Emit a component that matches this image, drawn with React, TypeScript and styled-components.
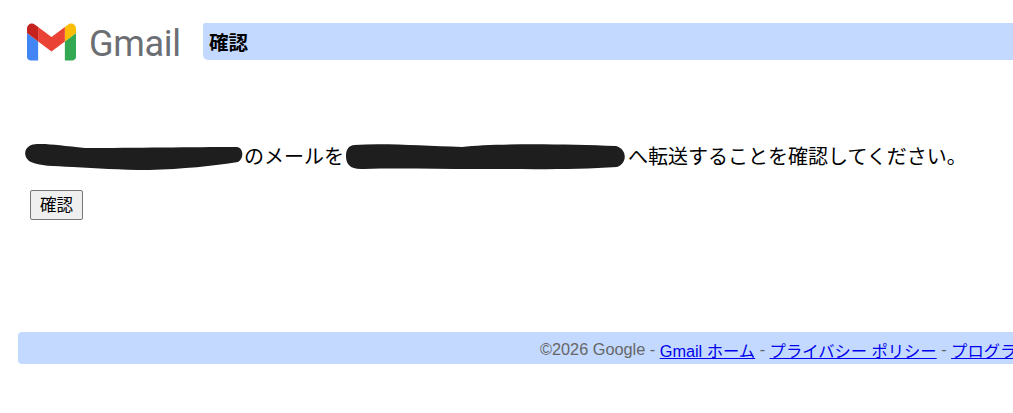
import React from "react";
import styled, { createGlobalStyle } from "styled-components";

const GlobalStyle = createGlobalStyle`
  html, body {
    margin: 0;
    padding: 0;
    background: #fff;
    overflow: hidden;
  }
  body {
    font-family: "Liberation Sans", "Noto Sans CJK JP", sans-serif;
  }
`;

const Page = styled.div`
  width: 1013px;
  height: 413px;
  overflow: hidden;
  display: flex;
  flex-direction: column;
`;

const Header = styled.header`
  display: flex;
  align-items: flex-start;
  padding: 23px 0 0 27px;
  height: 37px;
`;

const Logo = styled.div`
  display: flex;
  align-items: center;
  gap: 13px;
  width: 176px;
  height: 38px;
  flex: none;
`;

const Wordmark = styled.span`
  font-family: "Roboto", sans-serif;
  font-size: 36px;
  line-height: 38px;
  letter-spacing: -0.3px;
  padding-top: 3px;
  color: #6b6e72;
`;

const TitleBar = styled.div`
  flex: 1;
  height: 37px;
  background: #c3d9ff;
  border-bottom-left-radius: 5px;
  border-top-left-radius: 2px;
  padding-left: 6px;
  display: flex;
  align-items: center;
`;

const Title = styled.h1`
  margin: 0;
  font-size: 19.5px;
  font-weight: bold;
  color: #000;
`;

const Main = styled.main`
  padding: 83px 0 0 23px;
  height: 272px;
  box-sizing: border-box;
`;

const Message = styled.p`
  margin: 0;
  display: flex;
  align-items: center;
  height: 28px;
  font-size: 20px;
  line-height: 24px;
  color: #000;
  white-space: nowrap;
`;

const Redaction = styled.svg`
  flex: none;
  display: block;
`;

const SecondRedaction = styled(Redaction)`
  margin: 0 1px 0 2px;
`;

const ConfirmButton = styled.button`
  display: block;
  margin: 19px 0 0 7px;
  width: 53px;
  height: 30px;
  padding: 0;
  border: 1px solid #767676;
  border-radius: 2px;
  background: #efefef;
  color: #000;
  font-family: inherit;
  font-size: 16.5px;
  line-height: 1;
`;

const Footer = styled.footer`
  margin: 0 0 0 18px;
  height: 32px;
  flex: none;
  box-sizing: border-box;
  padding: 3px 0 0 522px;
  background: #c3d9ff;
  border-radius: 4px 0 0 4px;
  display: flex;
  align-items: center;
  font-size: 16.3px;
  color: #666;
  white-space: pre;
  overflow: hidden;
`;

const FooterLink = styled.a`
  color: #0000ee;
  text-decoration: underline;
`;

const GmailMark = () => (
  <svg width="49" height="38" viewBox="52 42 88 66" aria-label="Gmail">
    <path fill="#4285f4" d="M58 108h14V74L52 59v43c0 3.32 2.69 6 6 6" />
    <path fill="#34a853" d="M120 108h14c3.32 0 6-2.69 6-6V59l-20 15" />
    <path fill="#fbbc04" d="M120 48v26l20-15v-8c0-7.42-8.47-11.65-14.4-7.2" />
    <path fill="#ea4335" d="M72 74V48l24 18 24-18v26L96 92" />
    <path fill="#c5221f" d="M52 51v8l20 15V48l-5.6-4.2c-5.94-4.45-14.4-.22-14.4 7.2" />
  </svg>
);

export default function App() {
  return (
    <Page>
      <GlobalStyle />
      <Header>
        <Logo>
          <GmailMark />
          <Wordmark>Gmail</Wordmark>
        </Logo>
        <TitleBar>
          <Title>確認</Title>
        </TitleBar>
      </Header>
      <Main>
        <Message>
          <Redaction width="221" height="28" viewBox="0 0 221 28">
            <path
              d="M10 1.5C24 0 38 3 62 5C110 5 170 4 214 4C221 5 221 16 215 19C190 23 160 26 126 27C96 27 74 25 50 24C30 23 16 23 8 19C0 15 0 4 10 1.5Z"
              fill="#1e1e1e"
            />
          </Redaction>
          のメールを
          <SecondRedaction width="281" height="28" viewBox="0 0 281 28">
            <path
              d="M8 2C40 0 78 3 116 4C150 0 220 1 270 3C281 6 282 20 271 24C230 27 180 26 128 26C90 26 50 25 18 26C4 27 0 21 0 13C0 7 2 3 8 2Z"
              fill="#1e1e1e"
            />
          </SecondRedaction>
          へ転送することを確認してください。
        </Message>
        <ConfirmButton type="button">確認</ConfirmButton>
      </Main>
      <Footer>
        ©2026 Google - <FooterLink href="#">Gmail ホーム</FooterLink> -{" "}
        <FooterLink href="#">プライバシー ポリシー</FooterLink> -{" "}
        <FooterLink href="#">プログラム ポリシー</FooterLink>
      </Footer>
    </Page>
  );
}
